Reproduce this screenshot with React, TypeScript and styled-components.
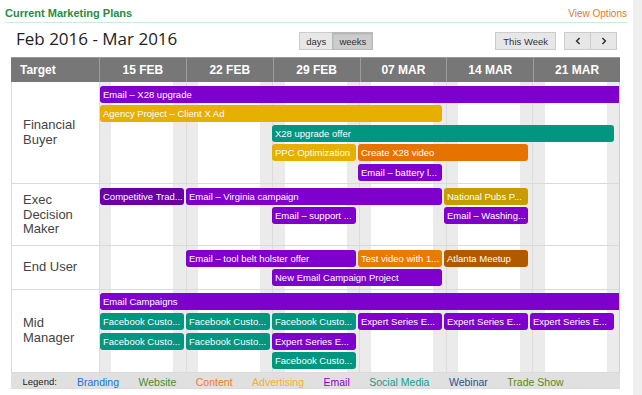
import React from 'react';
import styled, { createGlobalStyle } from 'styled-components';

const GlobalStyle = createGlobalStyle`
  html, body {
    margin: 0;
    padding: 0;
    background: #fff;
  }
  body {
    font-family: "Liberation Sans", Arial, sans-serif;
  }
  * {
    box-sizing: border-box;
  }
`;

const colors = {
  email: '#7f00cc',
  emailDark: '#6800a3',
  ad: '#e6b000',
  adDark: '#c79c00',
  social: '#00967f',
  content: '#e67300',
  contentLight: '#e87b00',
  trade: '#b05a00',
};

// one gradient over the whole lane area: column line + shaded first and last day
const DAY = 100 / 42;
const weekShade = Array.from({ length: 6 }, (_, i) => {
  const a = (i * 100) / 6;
  return [
    `#dcdcdc ${a}%`,
    `#dcdcdc calc(${a}% + 1px)`,
    `#ebebeb calc(${a}% + 1px)`,
    `#ebebeb ${a + DAY}%`,
    `#fff ${a + DAY}%`,
    `#fff ${a + 6 * DAY}%`,
    `#ebebeb ${a + 6 * DAY}%`,
    `#ebebeb ${a + 7 * DAY}%`,
  ].join(', ');
}).join(', ');

const Page = styled.div`
  display: flex;
  width: 642px;
  height: 395px;
  overflow: hidden;
`;

const Main = styled.div`
  width: 633px;
  background: #fff;
`;

const ScrollTrack = styled.div`
  flex: 1;
  background: #efefef;
`;

const TitleBar = styled.div`
  display: flex;
  justify-content: space-between;
  align-items: center;
  height: 23px;
  margin: 0 5px;
  padding: 4px 1px 0 0;
  border-bottom: 1px solid #c6efd6;
`;

const Title = styled.div`
  color: #22903e;
  font-size: 11px;
  font-weight: bold;
`;

const ViewOptions = styled.a`
  color: #e8762c;
  font-size: 10px;
  text-decoration: none;
  cursor: pointer;
`;

const Calendar = styled.div`
  margin: 0 13px 0 11px;
`;

const Toolbar = styled.div`
  display: flex;
  align-items: center;
  height: 18px;
  margin: 9px 0 7px;
  padding: 0 3px 0 5px;
`;

const DateTitle = styled.h2`
  margin: 0 0 4px;
  font-family: "Open Sans", "Liberation Sans", sans-serif;
  font-size: 17px;
  font-weight: normal;
  line-height: 18px;
  color: #222;
`;

const Center = styled.div`
  flex: 1;
  display: flex;
  justify-content: center;
`;

const Group = styled.div`
  display: flex;
`;

const Btn = styled.button<{ $active?: boolean; $pad?: number }>`
  height: 18px;
  padding: 0 ${p => p.$pad ?? 6}px;
  font-family: "Liberation Sans", Arial, sans-serif;
  font-size: 9.5px;
  color: #333;
  background: ${p => (p.$active ? '#cdcdcd' : '#e7e7e7')};
  border: 1px solid ${p => (p.$active ? '#b9b9b9' : '#cccccc')};
  box-shadow: ${p => (p.$active ? 'inset 0 1px 2px rgba(0, 0, 0, 0.15)' : 'none')};
  border-radius: 0;
  cursor: pointer;

  & + & {
    margin-left: -1px;
  }
`;

const NavBtn = styled(Btn)`
  width: 27px;
  display: flex;
  align-items: center;
  justify-content: center;
`;

const RightTools = styled.div`
  display: flex;
  gap: 8px;
`;

const Table = styled.div`
  width: 609px;
`;

const HeadRow = styled.div`
  display: grid;
  grid-template-columns: 88px repeat(6, 1fr);
  height: 25px;
  background: #777;
  border-top: 1px solid #9b9b9b;
`;

const HeadCell = styled.div<{ $first?: boolean }>`
  display: flex;
  align-items: center;
  justify-content: ${p => (p.$first ? 'flex-start' : 'center')};
  padding-left: ${p => (p.$first ? 9 : 0)}px;
  color: #fff;
  font-size: 12px;
  font-weight: bold;

  & + & {
    border-left: 1px solid #9d9d9d;
  }
`;

const BodyRow = styled.div`
  display: grid;
  grid-template-columns: 87px 1fr;
  border-left: 1px solid #dadada;
  border-right: 1px solid #d0d0d0;
  border-bottom: 1px solid #dadada;
`;

const Label = styled.div`
  display: flex;
  align-items: center;
  padding: 9px 10px 9px 11px;
  font-size: 13px;
  line-height: 14.3px;
  color: #444;
`;

const Lanes = styled.div`
  display: grid;
  grid-template-columns: repeat(6, 86px) 1fr;
  grid-auto-rows: 17px;
  row-gap: 2.6px;
  align-content: start;
  padding: 3.5px 0 2.5px 1px;
  background-image: linear-gradient(to right, ${weekShade});
`;

const Event = styled.div<{ $bg: string; $col: number; $span: number; $lane: number; $open?: boolean }>`
  grid-column: ${p => (p.$open ? `${p.$col} / -1` : `${p.$col} / span ${p.$span}`)};
  grid-row: ${p => p.$lane};
  margin-right: ${p => (p.$open ? 0 : 2)}px;
  padding-left: 3px;
  background: ${p => p.$bg};
  border-radius: ${p => (p.$open ? '3px 0 0 3px' : '3px')};
  color: #fff;
  font-size: 9.5px;
  line-height: 17px;
  white-space: nowrap;
  overflow: hidden;
`;

const Legend = styled.div`
  display: flex;
  gap: 19.5px;
  height: 16px;
  overflow: hidden;
  padding: 3.5px 0 0 11.5px;
  background: #e0e0e0;
  border-bottom: 1px solid #dcdcdc;
  font-size: 10.5px;
  line-height: 12px;
`;

const LegendLabel = styled.span`
  width: 35px;
  font-size: 9.5px;
  color: #222;
`;

const LegendItem = styled.span<{ $color: string }>`
  color: ${p => p.$color};
`;

type Ev = { text: string; bg: string; col: number; span: number; lane: number; open?: boolean };
type Row = { label: string; events: Ev[] };

const weeks = ['15 FEB', '22 FEB', '29 FEB', '07 MAR', '14 MAR', '21 MAR'];

const rows: Row[] = [
  {
    label: 'Financial Buyer',
    events: [
      { text: 'Email – X28 upgrade', bg: colors.email, col: 1, span: 6, lane: 1, open: true },
      { text: 'Agency Project – Client X Ad', bg: colors.ad, col: 1, span: 4, lane: 2 },
      { text: 'X28 upgrade offer', bg: colors.social, col: 3, span: 4, lane: 3 },
      { text: 'PPC Optimization', bg: colors.ad, col: 3, span: 1, lane: 4 },
      { text: 'Create X28 video', bg: colors.content, col: 4, span: 2, lane: 4 },
      { text: 'Email – battery l...', bg: colors.email, col: 4, span: 1, lane: 5 },
    ],
  },
  {
    label: 'Exec Decision Maker',
    events: [
      { text: 'Competitive Trad...', bg: colors.emailDark, col: 1, span: 1, lane: 1 },
      { text: 'Email – Virginia campaign', bg: colors.email, col: 2, span: 3, lane: 1 },
      { text: 'National Pubs P...', bg: colors.adDark, col: 5, span: 1, lane: 1 },
      { text: 'Email – support ...', bg: colors.email, col: 3, span: 1, lane: 2 },
      { text: 'Email – Washing...', bg: colors.email, col: 5, span: 1, lane: 2 },
    ],
  },
  {
    label: 'End User',
    events: [
      { text: 'Email – tool belt holster offer', bg: colors.email, col: 2, span: 2, lane: 1 },
      { text: 'Test video with 1...', bg: colors.contentLight, col: 4, span: 1, lane: 1 },
      { text: 'Atlanta Meetup', bg: colors.trade, col: 5, span: 1, lane: 1 },
      { text: 'New Email Campaign Project', bg: colors.email, col: 3, span: 2, lane: 2 },
    ],
  },
  {
    label: 'Mid Manager',
    events: [
      { text: 'Email Campaigns', bg: colors.email, col: 1, span: 6, lane: 1, open: true },
      { text: 'Facebook Custo...', bg: colors.social, col: 1, span: 1, lane: 2 },
      { text: 'Facebook Custo...', bg: colors.social, col: 2, span: 1, lane: 2 },
      { text: 'Facebook Custo...', bg: colors.social, col: 3, span: 1, lane: 2 },
      { text: 'Expert Series E...', bg: colors.email, col: 4, span: 1, lane: 2 },
      { text: 'Expert Series E...', bg: colors.email, col: 5, span: 1, lane: 2 },
      { text: 'Expert Series E...', bg: colors.email, col: 6, span: 1, lane: 2 },
      { text: 'Facebook Custo...', bg: colors.social, col: 1, span: 1, lane: 3 },
      { text: 'Facebook Custo...', bg: colors.social, col: 2, span: 1, lane: 3 },
      { text: 'Expert Series E...', bg: colors.email, col: 3, span: 1, lane: 3 },
      { text: 'Facebook Custo...', bg: colors.social, col: 3, span: 1, lane: 4 },
    ],
  },
];

const legend = [
  { name: 'Branding', color: '#1f6fd0' },
  { name: 'Website', color: '#4a8c1c' },
  { name: 'Content', color: '#ee7d22' },
  { name: 'Advertising', color: '#efb324' },
  { name: 'Email', color: '#8000cc' },
  { name: 'Social Media', color: '#1a9a8a' },
  { name: 'Webinar', color: '#2e4f8f' },
  { name: 'Trade Show', color: '#5b8a0e' },
];

const Chevron = ({ dir }: { dir: 'left' | 'right' }) => (
  <svg width="6" height="8" viewBox="0 0 6 8">
    <path
      d={dir === 'left' ? 'M4.6 1 L1.6 4 L4.6 7' : 'M1.4 1 L4.4 4 L1.4 7'}
      fill="none"
      stroke="#333"
      strokeWidth="1.5"
    />
  </svg>
);

const App: React.FC = () => {
  return (
    <Page>
      <GlobalStyle />
      <Main>
        <TitleBar>
          <Title>Current Marketing Plans</Title>
          <ViewOptions>View Options</ViewOptions>
        </TitleBar>

        <Calendar>
          <Toolbar>
            <DateTitle>Feb 2016 - Mar 2016</DateTitle>
            <Center>
              <Group>
                <Btn>days</Btn>
                <Btn $active>weeks</Btn>
              </Group>
            </Center>
            <RightTools>
              <Btn $pad={7}>This Week</Btn>
              <Group>
                <NavBtn>
                  <Chevron dir="left" />
                </NavBtn>
                <NavBtn>
                  <Chevron dir="right" />
                </NavBtn>
              </Group>
            </RightTools>
          </Toolbar>

          <Table>
            <HeadRow>
              <HeadCell $first>Target</HeadCell>
              {weeks.map(w => (
                <HeadCell key={w}>{w}</HeadCell>
              ))}
            </HeadRow>

            {rows.map(row => (
              <BodyRow key={row.label}>
                <Label>{row.label}</Label>
                <Lanes>
                  {row.events.map((ev, i) => (
                    <Event
                      key={i}
                      $bg={ev.bg}
                      $col={ev.col}
                      $span={ev.span}
                      $lane={ev.lane}
                      $open={ev.open}
                    >
                      {ev.text}
                    </Event>
                  ))}
                </Lanes>
              </BodyRow>
            ))}

            <Legend>
              <LegendLabel>Legend:</LegendLabel>
              {legend.map(l => (
                <LegendItem key={l.name} $color={l.color}>
                  {l.name}
                </LegendItem>
              ))}
            </Legend>
          </Table>
        </Calendar>
      </Main>
      <ScrollTrack />
    </Page>
  );
};

export default App;
